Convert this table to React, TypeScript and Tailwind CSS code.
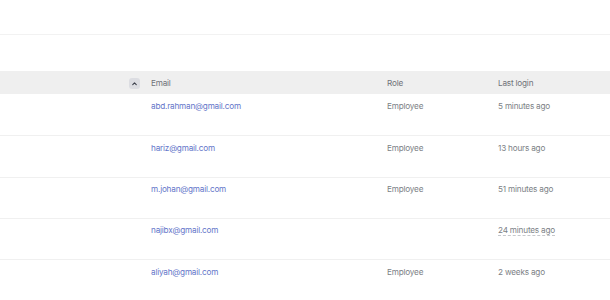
import React from "react";

const rows = [
  { email: "abd.rahman@gmail.com", role: "Employee", last: "5 minutes ago", dashed: false },
  { email: "hariz@gmail.com", role: "Employee", last: "13 hours ago", dashed: false },
  { email: "m.johan@gmail.com", role: "Employee", last: "51 minutes ago", dashed: false },
  { email: "najibx@gmail.com", role: "", last: "24 minutes ago", dashed: true },
  { email: "aliyah@gmail.com", role: "Employee", last: "2 weeks ago", dashed: false },
];

export default function App() {
  return (
    <div className="w-[610px] h-[300px] overflow-hidden bg-white text-[8.2px] tracking-[-0.2px] text-[#7c7f86]" style={{ fontFamily: "Inter, 'Liberation Sans', sans-serif" }}>
      <div className="h-[35px] border-b border-[#f2f2f2]" />
      <div className="h-[36px]" />
      <div className="flex h-[23px] items-center pt-[1px] bg-[#efefef]">
        <div className="w-[151px] flex justify-end pr-[11px]">
          <div className="w-[11px] h-[11px] rounded-[3px] bg-[#dcdde2] flex items-center justify-center">
            <svg width="7" height="7" viewBox="0 0 10 10"><path d="M2.5 6.5 L5 4 L7.5 6.5" stroke="#3b3f4a" strokeWidth="1.6" fill="none" strokeLinecap="round" strokeLinejoin="round" /></svg>
          </div>
        </div>
        <div className="w-[236px] text-[#6f7279]">Email</div>
        <div className="w-[111px] text-[#6f7279]">Role</div>
        <div className="flex-1 text-[#6f7279]">Last login</div>
      </div>
      {rows.map((r, i) => (
        <div key={i} className={`flex h-[41.3px] pt-[5.5px] ${i > 0 ? "border-t border-[#f0f0f0]" : ""}`}>
          <div className="w-[151px]" />
          <div className="w-[236px] text-[#6475c9]">{r.email}</div>
          <div className="w-[111px]">{r.role}</div>
          <div className="flex-1">
            <span className={r.dashed ? "border-b border-dashed border-[#c6c8cc]" : ""}>{r.last}</span>
          </div>
        </div>
      ))}
    </div>
  );
}
